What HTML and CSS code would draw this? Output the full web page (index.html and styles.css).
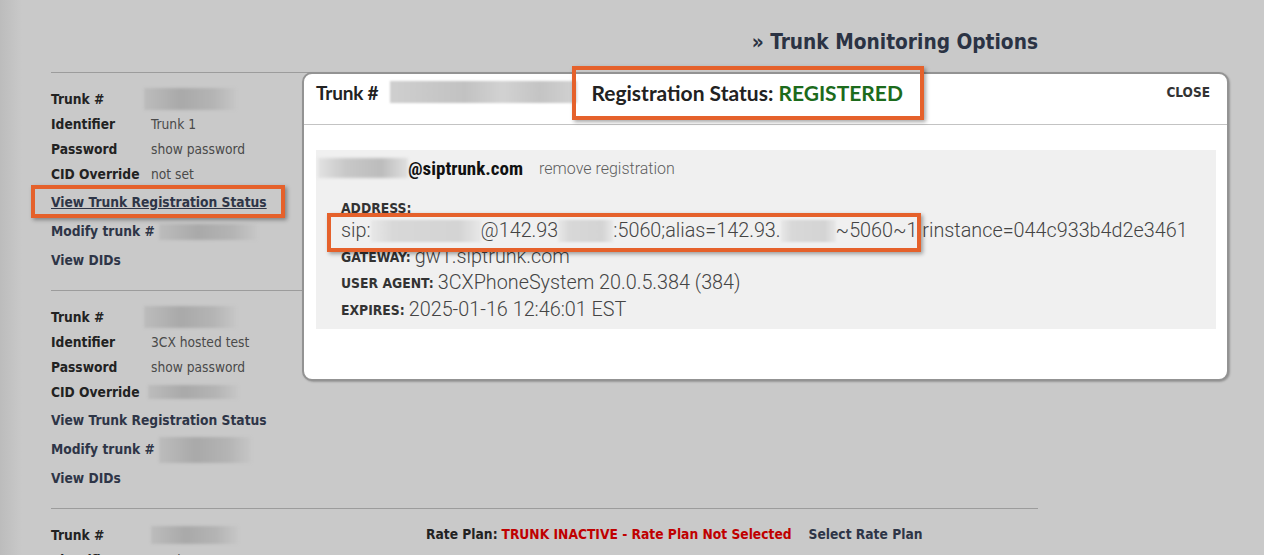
FILE: index.html
```html
<!DOCTYPE html>
<html>
<head>
<meta charset="utf-8">
<link rel="stylesheet" href="styles.css">
</head>
<body>
<div class="page">
  <header class="top">
    <h1 class="title">» Trunk Monitoring Options</h1>
  </header>

  <section class="trunk">
    <div class="details">
      <div class="row"><span class="lbl">Trunk #</span><span class="blur b-trunk"></span></div>
      <div class="row"><span class="lbl">Identifier</span><span class="val">Trunk 1</span></div>
      <div class="row"><span class="lbl">Password</span><span class="val">show password</span></div>
      <div class="row"><span class="lbl">CID Override</span><span class="val">not set</span></div>
      <div class="links">
        <a class="lnk under">View Trunk Registration Status</a>
        <a class="lnk">Modify trunk # <span class="blur b-mod"></span></a>
        <a class="lnk">View DIDs</a>
      </div>
    </div>
    <div class="rate"><b>Rate Plan:</b> <span class="red">TRUNK INACTIVE - Rate Plan Not Selected</span><a class="sel">Select Rate Plan</a></div>
  </section>

  <section class="trunk">
    <div class="details">
      <div class="row"><span class="lbl">Trunk #</span><span class="blur b-trunk"></span></div>
      <div class="row"><span class="lbl">Identifier</span><span class="val">3CX hosted test</span></div>
      <div class="row"><span class="lbl">Password</span><span class="val">show password</span></div>
      <div class="row"><span class="lbl">CID Override</span><span class="blur b-cid"></span></div>
      <div class="links">
        <a class="lnk">View Trunk Registration Status</a>
        <a class="lnk">Modify trunk # <span class="blur b-mod2"></span></a>
        <a class="lnk">View DIDs</a>
      </div>
    </div>
    <div class="rate"><b>Rate Plan:</b> <span class="red">TRUNK INACTIVE - Rate Plan Not Selected</span><a class="sel">Select Rate Plan</a></div>
  </section>

  <section class="trunk">
    <div class="details">
      <div class="row"><span class="lbl">Trunk #</span><span class="blur b-trunk3"></span></div>
      <div class="row"><span class="lbl">Identifier</span><span class="val">Trunk 3</span></div>
      <div class="row"><span class="lbl">Password</span><span class="val">show password</span></div>
    </div>
    <div class="rate"><b>Rate Plan:</b> <span class="red">TRUNK INACTIVE - Rate Plan Not Selected</span><a class="sel">Select Rate Plan</a></div>
  </section>
</div>

<div class="modal">
  <div class="m-head">
    <div class="m-title"><span class="m-trunk">Trunk #</span><span class="blur b-head"></span><span class="m-status">Registration Status: <span class="green">REGISTERED</span></span></div>
    <a class="close">CLOSE</a>
  </div>
  <div class="m-body">
    <div class="panel">
      <div class="p-user"><span class="blur b-user"></span><span class="dom">@siptrunk.com</span><a class="remove">remove registration</a></div>
      <div class="p-info">
        <div class="k-line"><span class="k">Address:</span></div>
        <div class="v-line">sip:<span class="blur b-a1"></span>@142.93<span class="blur b-a2"></span>:5060;alias=142.93.<span class="blur b-a3"></span>~5060~1 rinstance=044c933b4d2e3461</div>
        <div class="v-line"><span class="k">Gateway:</span> gw1.siptrunk.com</div>
        <div class="v-line"><span class="k">User Agent:</span> 3CXPhoneSystem 20.0.5.384 (384)</div>
        <div class="v-line"><span class="k">Expires:</span> 2025-01-16 12:46:01 EST</div>
      </div>
    </div>
  </div>
</div>

<div class="mark mark-link"></div>
<div class="mark mark-status"></div>
<div class="mark mark-addr"></div>
</body>
</html>
```

FILE: styles.css
```css
html, body {
  margin: 0;
  padding: 0;
}
body {
  width: 1264px;
  height: 555px;
  overflow: hidden;
  background: linear-gradient(to right, #bcbcbc 0px, #c9c9c9 22px, #c9c9c9 100%);
  font-family: "DejaVu Sans Condensed", "DejaVu Sans", sans-serif;
  font-size: 13.7px;
  color: #222;
  position: relative;
}
.page {
  margin-left: 51px;
  width: 987px;
}
.top {
  height: 72px;
  display: flex;
  justify-content: flex-end;
}
.title {
  margin: 0;
  padding-top: 28px;
  line-height: 28px;
  font-size: 20.7px;
  font-weight: bold;
  color: #2b3344;
}
.trunk {
  border-top: 1px solid #9c9c9c;
  padding: 13px 0 15px;
  display: flex;
}
.details {
  width: 375px;
}
.row {
  display: flex;
  align-items: center;
  height: 25px;
}
.lbl {
  width: 100px;
  font-weight: bold;
  color: #222;
}
.val {
  color: #4a4a4a;
}
.links {
  margin-top: 2px;
  display: flex;
  flex-direction: column;
}
.lnk {
  height: 29px;
  line-height: 29px;
  font-weight: bold;
  color: #2e3547;
  display: flex;
  align-items: center;
}
.lnk.under {
  text-decoration: underline;
}
.blur {
  display: inline-block;
  background: linear-gradient(to right, #bcbcbc, #a9a9a9 40%, #b4b4b4 75%, #c6c6c6);
  filter: blur(1.5px);
}
.b-trunk { width: 92px; height: 22px; margin-left: -7px; }
.b-trunk3 { width: 87px; height: 18px; }
.b-cid { width: 90px; height: 14px; margin-left: -3px; }
.b-mod { width: 98px; height: 16px; margin-left: 4px; }
.b-mod2 { width: 92px; height: 26px; margin-left: 4px; }
.rate {
  height: 25px;
  line-height: 25px;
  color: #222;
  white-space: nowrap;
}
.rate b { color: #222; }
.red {
  color: #c00000;
  font-weight: bold;
}
.sel {
  margin-left: 17px;
  font-weight: bold;
  color: #2e3547;
}

/* modal overlay */
.modal {
  position: absolute;
  left: 302px;
  top: 72px;
  width: 923px;
  height: 305px;
  background: #fff;
  border: 2px solid #939393;
  border-radius: 10px;
  box-shadow: 1px 1px 2px rgba(0,0,0,0.25);
}
.m-head {
  box-sizing: border-box;
  height: 51px;
  padding: 0 17px 14px 12px;
  border-bottom: 1px solid #c3c3c3;
  display: flex;
  align-items: center;
  justify-content: space-between;
}
.m-title {
  display: flex;
  align-items: center;
  font-family: "Lato", "Roboto", sans-serif;
  font-weight: bold;
  font-size: 20px;
  color: #222;
}
.m-trunk {
  font-size: 19px;
  letter-spacing: -0.2px;
}
.m-status {
  font-size: 21px;
}
.b-head {
  width: 187px;
  height: 22px;
  margin: 0 14px 0 12px;
  background: linear-gradient(to right, #cfcfcf, #c2c2c2 40%, #d2d2d2 60%, #c4c4c4 80%, #d2d2d2);
  filter: blur(1px);
}
.green { color: #1c6b1c; }
.close {
  font-family: "DejaVu Sans Condensed", "DejaVu Sans", sans-serif;
  font-weight: bold;
  font-size: 13.5px;
  color: #333;
}
.m-body {
  padding: 25px 11px 0 12px;
}
.panel {
  background: #f0f0f0;
  height: 173px;
  padding-bottom: 6px;
}
.p-user {
  height: 36px;
  display: flex;
  align-items: center;
  padding-left: 2px;
}
.b-user {
  width: 90px;
  height: 20px;
  background: linear-gradient(to right, #e2e2e2, #c8c8c8 30%, #bcbcbc 70%, #e0e0e0);
}
.dom {
  font-family: "Liberation Sans Narrow", "Roboto Condensed", "Roboto", sans-serif;
  font-weight: bold;
  font-size: 19px;
  color: #111;
}
.remove {
  margin-left: 16px;
  font-family: "Roboto", sans-serif;
  font-weight: 300;
  font-size: 16px;
  color: #5e5e5e;
}
.p-info {
  padding-left: 25px;
  margin-top: 12px;
}
.k-line {
  height: 20px;
  line-height: 20px;
}
.k {
  font-family: "DejaVu Sans Condensed", "DejaVu Sans", sans-serif;
  font-weight: bold;
  font-size: 13.8px;
  text-transform: uppercase;
  color: #333;
}
.v-line {
  height: 26px;
  line-height: 26px;
  font-family: "Roboto", sans-serif;
  font-weight: 300;
  font-size: 19.8px;
  color: #444;
  white-space: nowrap;
  display: flex;
  align-items: center;
}
.v-line .k { margin-right: 4px; }
.v-line:last-child { margin-top: 1px; }
.b-a1, .b-a2, .b-a3 {
  height: 22px;
  background: linear-gradient(to right, #e8e8e8, #d8d8d8 20%, #d4d4d4 80%, #e8e8e8);
  filter: blur(1px);
}
.b-a1 { width: 110px; }
.b-a2 { width: 55px; }
.b-a3 { width: 55px; }

/* orange annotation boxes */
.mark {
  position: absolute;
  border: 4px solid #e5612b;
  box-shadow: 2px 2px 4px rgba(0,0,0,0.35);
}
.mark-link { left: 31px; top: 185px; width: 246px; height: 25px; }
.mark-status { left: 572px; top: 66px; width: 344px; height: 46px; }
.mark-addr { left: 327px; top: 213px; width: 586px; height: 31px; }
```
